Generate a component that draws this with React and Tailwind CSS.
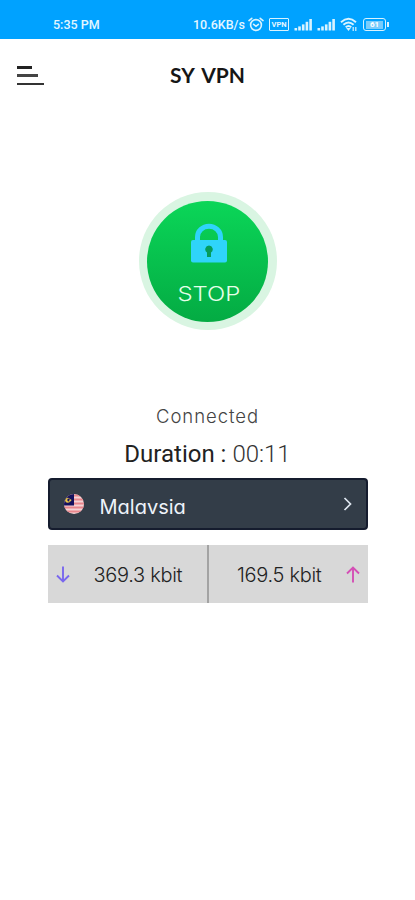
import React from "react";

const geo = "font-['Inter',sans-serif] [font-feature-settings:'cv11']";

function Signal() {
  return (
    <svg width="19" height="14" viewBox="0 0 19 14" fill="#d9f3ff">
      <rect x="0.5" y="10" width="2.6" height="2.5" />
      <rect x="4.2" y="8.4" width="2.6" height="4.1" />
      <rect x="7.9" y="6.4" width="2.6" height="6.1" />
      <rect x="11.6" y="3.8" width="2.6" height="8.7" />
      <rect x="15.3" y="1" width="2.6" height="11.5" />
    </svg>
  );
}

function StatusBar() {
  return (
    <div className="relative h-[39px] bg-[#00a2ff] text-[#e4f6ff] font-['Roboto',sans-serif] font-medium">
      <span className="absolute left-[53px] top-[17px] text-[12.5px] leading-4 whitespace-nowrap">5:35 PM</span>
      <span className="absolute left-[193px] top-[17px] text-[12.5px] leading-4 whitespace-nowrap">10.6KB/s</span>
      <svg className="absolute left-[248px] top-[17px]" width="16" height="15" viewBox="0 0 16 15" fill="none" stroke="#d9f3ff" strokeWidth="1.6" strokeLinecap="round">
        <circle cx="8" cy="8" r="5.4" />
        <path d="M1 3.6 3.8 1.3M15 3.6 12.2 1.3M5.6 7.3 8 9.3l2.4-2" />
      </svg>
      <span className="absolute left-[269px] top-[18px] flex h-[13px] w-5 items-center justify-center rounded-[1px] border-[1.5px] border-[#d9f3ff] text-[7.5px] font-bold leading-none">
        VPN
      </span>
      <div className="absolute left-[294px] top-[18px] flex gap-1">
        <Signal />
        <Signal />
      </div>
      <svg className="absolute left-[340px] top-[17px]" width="18" height="15" viewBox="0 0 18 15" fill="none" stroke="#d9f3ff" strokeWidth="1.9">
        <path d="M1 5.2Q8.5-1.6 16 5.2M3.4 7.8Q8.5 3.2 13.6 7.8M5.7 10.3Q8.5 7.8 11.3 10.3" />
        <path d="M6.2 11h4.6l-2.3 3z" fill="#d9f3ff" stroke="none" />
        <path d="M13.2 10v4M15.8 10v4" strokeWidth="1.2" />
      </svg>
      <span className="absolute left-[363px] top-[18px] flex h-[13px] w-[23px] items-center justify-center rounded-[3px] border-[1.5px] border-[#d9f3ff]">
        <span className="flex h-[8px] w-[17px] items-center justify-center bg-[#7accfb] text-[8px] font-bold leading-none text-white">
          61
        </span>
      </span>
      <span className="absolute left-[387px] top-[22px] h-[5px] w-[2px] bg-[#d9f3ff]" />
    </div>
  );
}

function Header() {
  return (
    <div className="relative flex h-[73px] items-center justify-center">
      <button className="absolute left-[17px] top-[27px] flex flex-col">
        <span className="h-[3px] w-[15px] bg-[#222222]" />
        <span className="mt-[5px] h-[3px] w-[21px] bg-[#444444]" />
        <span className="mt-[6px] h-[2px] w-[27px] bg-[#333333]" />
      </button>
      <h1 className="mb-[2px] font-['Lato',sans-serif] text-[21px] font-bold leading-none text-[#161616] [word-spacing:3px]">SY VPN</h1>
    </div>
  );
}

function StopButton() {
  return (
    <button className="mt-[80px] flex h-[138px] w-[138px] items-center justify-center rounded-full bg-[#d9f5e2]">
      <span className="flex h-[121px] w-[121px] flex-col items-center rounded-full bg-linear-to-b from-[#0bd658] to-[#04ab43]">
        <svg className="ml-[2px] mt-[22px]" width="38" height="40" viewBox="0 0 38 40">
          <path d="M7.5 18v-4a11.5 10.8 0 0 1 23 0v4" fill="none" stroke="#2fd4fa" strokeWidth="5" />
          <rect x="1" y="17" width="36" height="22.5" rx="2" fill="#2fd4fa" />
          <path d="M19 22.5a3.8 3.8 0 0 1 2 7v4.5h-4v-4.5a3.8 3.8 0 0 1 2-7z" fill="#059c5c" />
        </svg>
        <span className="ml-[2px] mt-[21px] scale-x-[1.17] text-[20.5px] font-light leading-[20px] text-[#e6ffe9] font-['Inter',sans-serif]">STOP</span>
      </span>
    </button>
  );
}

function Flag() {
  return (
    <svg width="20" height="20" viewBox="0 0 20 20">
      <defs>
        <clipPath id="round">
          <circle cx="10" cy="10" r="10" />
        </clipPath>
      </defs>
      <g clipPath="url(#round)">
        <rect width="20" height="20" fill="#f6d3d5" />
        <path d="M0 1.5h20M0 5.5h20M0 9.5h20M0 13.5h20M0 17.5h20" stroke="#e8868c" strokeWidth="2" />
        <rect width="10" height="11.5" fill="#15115e" />
        <circle cx="3.7" cy="6.3" r="2.5" fill="#e8c547" />
        <circle cx="4.7" cy="6" r="1.4" fill="#15115e" />
        <circle cx="6.3" cy="6.3" r="1.1" fill="#e8c547" />
      </g>
    </svg>
  );
}

function Arrow({ color, up }) {
  return (
    <svg width="14" height="17" viewBox="0 0 14 17" fill="none" stroke={color} strokeWidth="1.9">
      <path d={up ? "M7 16.5V1.5M1 7.5l6-6 6 6" : "M7 .5v15M1 9.5l6 6 6-6"} />
    </svg>
  );
}

export default function App() {
  return (
    <div className="h-[900px] w-[415px] overflow-hidden bg-white">
      <StatusBar />
      <Header />
      <div className="flex flex-col items-center">
        <StopButton />
        <p className={`${geo} mt-[74px] text-[18.5px] font-light leading-6 tracking-[0.95px] text-[#444444]`}>Connected</p>
        <p className="mt-[12px] flex h-7 items-center whitespace-pre text-[24px] font-normal leading-7 text-[#222222] font-['Roboto',sans-serif]">
          Duration : <span className="font-light text-[#333333]">00:11</span>
        </p>
        <button className="mt-[10px] flex h-[52px] w-[320px] items-center rounded-[4px] border-2 border-[#151c2e] bg-[#333d48] pl-[14px] pr-[14px]">
          <Flag />
          <span className={`${geo} ml-[16px] mt-[5px] text-[20px] leading-[24px] text-[#eef3fa]`}>Malavsia</span>
          <svg className="ml-auto" width="9" height="14" viewBox="0 0 9 14" fill="none" stroke="#dfe7f0" strokeWidth="1.7">
            <path d="M1.5 1 7.5 7l-6 6" />
          </svg>
        </button>
        <div className={`${geo} mt-[15px] flex h-[58px] w-[320px] bg-[#d8d8d8] text-[20px] font-light tracking-[-0.3px] text-[#222222]`}>
          <div className="flex w-[161px] items-center border-r-2 border-[#a3a3a3] pl-2">
            <Arrow color="#7967ee" />
            <span className="ml-[24px] mt-[2px]">369.3 kbit</span>
          </div>
          <div className="flex w-[159px] items-center justify-end pr-2">
            <span className="mr-[24px] mt-[2px]">169.5 kbit</span>
            <Arrow color="#d44fb5" up />
          </div>
        </div>
      </div>
    </div>
  );
}
